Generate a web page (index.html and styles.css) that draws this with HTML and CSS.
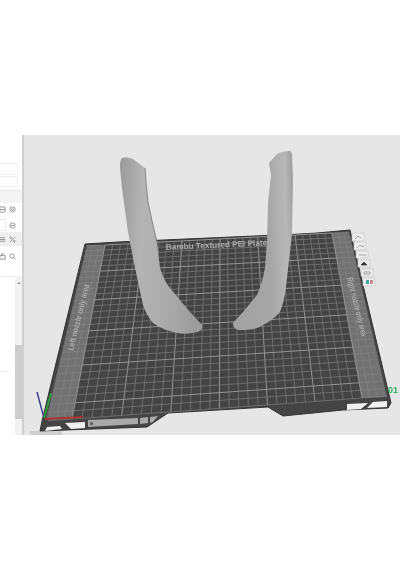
FILE: index.html
```html
<!DOCTYPE html>
<html lang="en">
<head>
  <meta charset="UTF-8" />
  <meta name="viewport" content="width=device-width, initial-scale=1.0" />
  <title>Bambu Studio</title>
  <link rel="stylesheet" href="styles.css">
</head>
<body>
  <div class="app">
    <aside class="sidebar">
      <div class="field"></div>
      <div class="field"></div>
      <div class="band band-first"></div>
      <div class="tool-row tool-row-tall">
        <svg class="tool" viewBox="0 0 8 8"><rect x="1" y="1" width="6" height="6" rx="1"/><path d="M1 4h6"/></svg>
        <svg class="tool" viewBox="0 0 8 8"><circle cx="4" cy="4" r="3"/><circle cx="4" cy="4" r="1"/></svg>
      </div>
      <div class="tool-row tool-row-input">
        <div class="mini-input"></div>
        <svg class="tool" viewBox="0 0 8 8"><circle cx="4" cy="4" r="3"/><path d="M2 4h4"/></svg>
      </div>
      <div class="band band-tools">
        <svg class="tool" viewBox="0 0 8 8"><path d="M1 2h6M1 4h6M1 6h6"/></svg>
        <svg class="tool" viewBox="0 0 8 8"><path d="M1 7l6-6"/><circle cx="2" cy="2" r="1"/><circle cx="6" cy="6" r="1"/></svg>
      </div>
      <div class="tool-row tool-row-search">
        <svg class="tool" viewBox="0 0 8 8"><path d="M1 3h6v4h-6zM3 3v-2h3"/></svg>
        <svg class="tool" viewBox="0 0 8 8"><circle cx="3.5" cy="3.5" r="2.5"/><path d="M5.5 5.5l2 2"/></svg>
      </div>
      <div class="object-list">
        <div class="list-rows"></div>
        <div class="scrollbar">
          <div class="scroll-arrow"></div>
          <div class="scroll-thumb"></div>
        </div>
      </div>
    </aside>

    <main class="viewport">
      <svg class="scene" viewBox="0 0 376 300" width="376" height="300">
        <defs>
          <linearGradient id="left-model" x1="0" y1="0" x2="1" y2="0.12">
            <stop offset="0" stop-color="#9a9a9a"/>
            <stop offset="0.3" stop-color="#b4b4b4"/>
            <stop offset="0.75" stop-color="#a8a8a8"/>
            <stop offset="1" stop-color="#9c9c9c"/>
          </linearGradient>
          <linearGradient id="right-model" x1="0" y1="0.1" x2="1" y2="0">
            <stop offset="0" stop-color="#a2a2a2"/>
            <stop offset="0.55" stop-color="#a6a6a6"/>
            <stop offset="0.85" stop-color="#b8b8b8"/>
            <stop offset="1" stop-color="#9c9c9c"/>
          </linearGradient>
        </defs>

        <!-- scene coords = page coords minus (24,135) -->
        <g transform="translate(-24 -135)">
          <rect class="under-plate" x="30" y="431" width="32" height="5"/>
          <polygon class="plate" points="85,244 118,242 300,234 317,233 350,230 391,403 388,408 343,410 283,416 268,407 168,413 147,427 40,431 42,421"/>
          <polygon class="strip" points="87,245 105,245 72,419 46,420"/>
          <polygon class="strip" points="332,233 349,232 387,397 362,398"/>
          <g id="grid"></g>

          <polygon class="cutout" points="47,427 60,426 62,429 45,431"/>
          <polygon class="cutout" points="65,423 85,422 85,428 71,429"/>
          <polygon class="cutout" points="347,404 368,403 361,409 347,410"/>
          <polygon class="cutout" points="373,402 387,401 387,407 367,408"/>
          <polygon class="label-strip" points="88,420 138,418 138,424 88,427"/>
          <polygon class="label-strip" points="140,418 148,417 148,423 140,424"/>
          <polygon class="label-strip" points="150,417 158,416 153,422 150,423"/>
          <rect class="label-mark" x="90" y="422" width="3" height="3"/>

          <text class="plate-text" transform="translate(166 250) rotate(-2.6)">Bambu Textured PEI Plate</text>
          <text class="plate-text" transform="translate(73 351) rotate(-76) scale(0.85 1)">Left nozzle only area</text>
          <text class="plate-text" transform="translate(347 278) rotate(76) scale(0.7 1)">Right nozzle only area</text>

          <path fill="url(#left-model)" d="M122 158 C126 157 130 158 133 159 L145 168 L146 182 L148 202 L153 225 L157 242 L160 268 C163 277 166 283 170 288 L190 312 L202 325 C203 329 200 332 197 332 C190 334 184 334 177 333 C168 331 160 328 153 323 C148 317 145 311 143 305 L135 268 L128 232 L122 188 L120 168 C120 163 120 160 122 158Z"/>
          <path class="model-edge" d="M145 168 L146 182 L148 202 L153 225 L157 242"/>
          <path fill="url(#right-model)" d="M290 151 C285 151 280 152 277 154 L269 163 L271 175 L268 202 L267 242 L265 268 C263 279 260 288 257 295 L243 312 L233 323 C233 327 235 329 238 330 C245 330 251 330 257 328 C266 324 274 319 280 312 C284 302 286 290 287 278 L292 235 L293 178 L292 155 C292 153 291 151 290 151Z"/>

          <path class="axis axis-blue" d="M44 418 L37 392"/>
          <path class="axis axis-green" d="M44 418 L51 393"/>
          <path class="axis axis-red" d="M45 419 L83 417"/>

          <g class="plate-tools">
            <rect x="352" y="233" width="12" height="8"/>
            <rect x="354" y="242" width="12" height="8"/>
            <rect x="356" y="251" width="12" height="7"/>
            <rect x="358" y="260" width="12" height="7"/>
            <rect x="361" y="269" width="12" height="7"/>
            <rect x="363" y="278" width="12" height="8"/>
            <path d="M355 239l3-3 3 2M357 248l3-3 3 2 1-2M359 255h7"/>
            <path class="dark" d="M361 265l3-3 3 3z"/>
            <path d="M364 272h6v2h-6z"/>
            <path class="teal" d="M366 280h3v4h-3z"/>
            <path class="pink" d="M370 280h3v4h-3z"/>
          </g>

          <text class="plate-index" x="388" y="393">01</text>
        </g>
      </svg>
    </main>
  </div>
  <script src="scene.js"></script>
</body>
</html>
```

FILE: styles.css
```css
body {
  margin: 0;
  background-color: #fff;
  font-family: "Liberation Sans", Arial, sans-serif;
  overflow: hidden;
}
.app {
  display: flex;
  margin-top: 135px;
  height: 300px;
  width: 400px;
  overflow: hidden;
  filter: blur(0.6px);
}
.sidebar {
  width: 22px;
  flex-shrink: 0;
  display: flex;
  flex-direction: column;
  padding-top: 28px;
  background-color: #fff;
  border-right: 2px solid #cfcfcf;
  height: 272px;
  overflow: hidden;
}
.field {
  width: 17px;
  height: 10px;
  margin-bottom: 1px;
  border: 1px solid #efefef;
  border-left: none;
}
.field + .field {
  height: 9px;
}
.band {
  height: 12px;
  background-color: #f4f4f4;
  flex-shrink: 0;
}
.band-first {
  margin-top: 2px;
  border-top: 1px solid #e8e8e8;
}
.band-tools {
  display: flex;
  align-items: center;
  gap: 3px;
  height: 14px;
  background-color: #efefef;
}
.tool-row {
  display: flex;
  align-items: center;
  gap: 3px;
  flex-shrink: 0;
}
.tool-row-tall {
  height: 15px;
  padding-bottom: 2px;
  box-sizing: border-box;
}
.tool-row-input {
  height: 14px;
}
.tool-row-search {
  height: 31px;
  padding-bottom: 10px;
  box-sizing: border-box;
  border-bottom: 1px solid #efefef;
}
.tool {
  width: 7px;
  height: 7px;
  flex-shrink: 0;
  fill: none;
  stroke: #8c8c8c;
  stroke-width: 1;
}
.tool:first-child {
  margin-left: -1px;
}
.mini-input {
  width: 6px;
  height: 12px;
  border: 1px solid #ececec;
  border-left: none;
  box-sizing: border-box;
}
.object-list {
  flex: 1;
  display: flex;
  justify-content: space-between;
}
.list-rows {
  width: 10px;
  height: 94px;
  border-bottom: 1px solid #f0f0f0;
}
.scrollbar {
  width: 7px;
  display: flex;
  flex-direction: column;
  background-color: #f1f1f1;
}
.scroll-arrow {
  width: 0;
  height: 0;
  margin: 5px auto 61px;
  border-left: 2px solid transparent;
  border-right: 2px solid transparent;
  border-bottom: 2px solid #9a9a9a;
}
.scroll-thumb {
  height: 74px;
  background-color: #cdcdcd;
}
.viewport {
  flex: 1;
  background-color: #e6e6e6;
  overflow: hidden;
}
.scene {
  display: block;
}
.under-plate {
  fill: #cfcfcf;
}
.plate {
  fill: #444;
  stroke: #333;
  stroke-width: 1;
  stroke-linejoin: round;
}
.strip {
  fill: #727272;
}
.grid-line {
  stroke: #7c7c7c;
  stroke-width: 0.7;
}
.grid-line-major {
  stroke: #9c9c9c;
  stroke-width: 0.9;
}
.grid-line-strip {
  stroke: #858585;
  stroke-width: 0.6;
}
.cutout {
  fill: #f0f0f0;
}
.label-strip {
  fill: #a9a9a9;
}
.label-mark {
  fill: #666;
}
.plate-text {
  fill: #ababab;
  font-size: 8.2px;
  font-weight: bold;
}
.model-edge {
  fill: none;
  stroke: #777;
  stroke-width: 0.8;
}
.axis {
  fill: none;
  stroke-width: 1.4;
}
.axis-blue {
  stroke: #38388c;
}
.axis-green {
  stroke: #2f9a3c;
  stroke-width: 2;
}
.axis-red {
  stroke: #a83232;
  stroke-width: 2;
}
.plate-tools rect {
  fill: #ececec;
  stroke: #c6c6c6;
  stroke-width: 0.6;
}
.plate-tools path {
  fill: none;
  stroke: #8a8a8a;
  stroke-width: 0.7;
}
.plate-tools .dark {
  fill: #333;
  stroke: #333;
}
.plate-tools .teal {
  fill: #49a6a0;
  stroke: none;
}
.plate-tools .pink {
  fill: #c98a9a;
  stroke: none;
}
.plate-index {
  fill: #2fb567;
  font-size: 9px;
  font-weight: bold;
}
```

FILE: scene.js
```js
// build bed grid with a projective map of the inner plate area
const corners = [[105, 245], [332, 233], [362, 398], [72, 419]];
const COLS = 30;
const ROWS = 27;
const STRIP = 3; // cells of the lighter strip on each side

function makeMap(q) {
  const [p0, p1, p2, p3] = q;
  const dx1 = p1[0] - p2[0], dx2 = p3[0] - p2[0], sx = p0[0] - p1[0] + p2[0] - p3[0];
  const dy1 = p1[1] - p2[1], dy2 = p3[1] - p2[1], sy = p0[1] - p1[1] + p2[1] - p3[1];
  const d = dx1 * dy2 - dx2 * dy1;
  const g = (sx * dy2 - dx2 * sy) / d;
  const h = (dx1 * sy - sx * dy1) / d;
  return (u, v) => {
    const w = g * u + h * v + 1;
    return [
      ((p1[0] - p0[0] + g * p1[0]) * u + (p3[0] - p0[0] + h * p3[0]) * v + p0[0]) / w,
      ((p1[1] - p0[1] + g * p1[1]) * u + (p3[1] - p0[1] + h * p3[1]) * v + p0[1]) / w
    ];
  };
}

const map = makeMap(corners);
const grid = document.getElementById('grid');

function addLine(a, b, cls) {
  const line = document.createElementNS('http://www.w3.org/2000/svg', 'line');
  line.setAttribute('x1', a[0]);
  line.setAttribute('y1', a[1]);
  line.setAttribute('x2', b[0]);
  line.setAttribute('y2', b[1]);
  line.setAttribute('class', cls);
  grid.appendChild(line);
}

const stripWidth = STRIP / COLS * 0.8;

for (let j = 0; j <= ROWS; j++) {
  const v = j / ROWS;
  addLine(map(-stripWidth, v), map(0, v), 'grid-line-strip');
  addLine(map(1, v), map(1 + stripWidth, v), 'grid-line-strip');
}
for (let i = 1; i < STRIP; i++) {
  const u = i / COLS * 0.8;
  addLine(map(-u, 0), map(-u, 1), 'grid-line-strip');
  addLine(map(1 + u, 0), map(1 + u, 1), 'grid-line-strip');
}
for (let i = 0; i <= COLS; i++) {
  addLine(map(i / COLS, 0), map(i / COLS, 1), i % 5 === 0 ? 'grid-line grid-line-major' : 'grid-line');
}
for (let j = 0; j <= ROWS; j++) {
  addLine(map(0, j / ROWS), map(1, j / ROWS), j % 5 === 0 ? 'grid-line grid-line-major' : 'grid-line');
}
```
